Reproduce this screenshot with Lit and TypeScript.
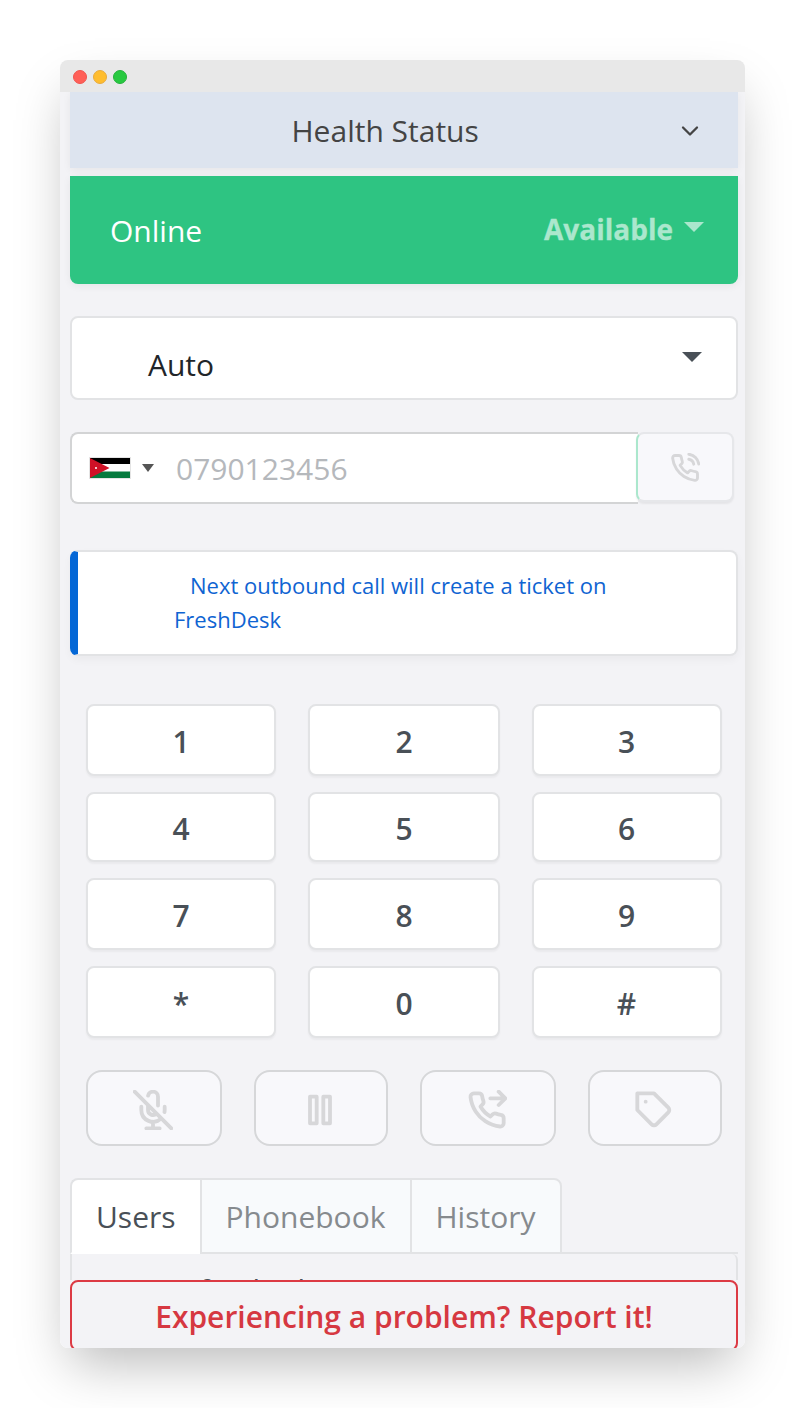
import { LitElement, html, css, svg } from "lit";
import { customElement } from "lit/decorators.js";

const icon = (cls: string, body: unknown) => html`<svg class=${cls} viewBox="0 0 24 24" fill="none" stroke="currentColor" stroke-width="2.300" stroke-linecap="round" stroke-linejoin="round" aria-hidden="true">${body}</svg>`;

const phoneBody = svg`<path d="M22 16.920v3a2 2 0 0 1-2.180 2 19.790 19.790 0 0 1-8.630-3.070 19.500 19.500 0 0 1-6-6 19.790 19.790 0 0 1-3.070-8.670A2 2 0 0 1 4.110 2h3a2 2 0 0 1 2 1.720 12.840 12.840 0 0 0 .7 2.810 2 2 0 0 1-.45 2.110L8.090 9.910a16 16 0 0 0 6 6l1.270-1.270a2 2 0 0 1 2.110-.45 12.840 12.840 0 0 0 2.810.7A2 2 0 0 1 22 16.920z"/>`;

@customElement("app-root")
export class AppRoot extends LitElement {
  static styles = css`
    :host { display: block; width: 805px; height: 1408px; padding: 60px; box-sizing: border-box; overflow: hidden; background: #fff; font-family: "Open Sans", "Noto Sans", sans-serif; font-size: 30px; line-height: 40px; color: #495057; }
    * { box-sizing: border-box; }
    svg { display: block; flex: none; }
    .window { height: 1288px; display: flex; flex-direction: column; border-radius: 8px; box-shadow: 0 25px 50px -10px rgba(0,0,0,.27); }
    .bar { height: 32px; flex: none; display: flex; align-items: center; gap: 6px; padding: 2px 0 0 13px; background: #e8e8e8; border-radius: 8px 8px 0 0; }
    .dot { width: 14px; height: 14px; border-radius: 50%; border: 1px solid; }
    .red { background: #ff5f57; border-color: #f0544e; }
    .yellow { background: #ffbd2e; border-color: #e8ab3c; }
    .green { background: #28c940; border-color: #25b13b; }
    .app { height: 1256px; padding: 0 7px 0 10px; background: #f3f3f6; overflow: hidden; border-radius: 0 0 8px 8px; display: flex; flex-direction: column; }
    .app > * { flex: none; }
    .health { height: 76px; display: flex; align-items: center; background: #dde4ef; color: #444; box-shadow: 0 2px 8px rgba(0,0,0,.06); padding: 2px 38px 0 221.500px; }
    .grow { flex: 1; white-space: nowrap; }
    .chev { width: 20px; height: 20px; margin-top: -1px; }
    .status { height: 108px; margin-top: 8px; display: flex; align-items: center; background: #2ec482; color: #fff; border-radius: 0 0 8px 8px; box-shadow: 0 2px 8px rgba(0,0,0,.06); padding: 2px 34px 0 40px; }
    .avail { font-weight: 700; color: #abe7cd; display: flex; gap: 11px; margin-top: -4px; font-size: 28px; -webkit-text-stroke: .3px #abe7cd; }
    .caret { width: 0; height: 0; border: 10px solid transparent; border-bottom: 0; border-top-color: currentColor; }
    .avail .caret { margin-top: 13px; }
    .select { height: 84px; margin-top: 32px; display: flex; border: 2px solid #e2e3e5; border-radius: 8px; background: #fff; color: #212529; padding: 27px 34px 0 76px; }
    .select .caret { margin-top: 7px; color: #495057; }
    .phone { height: 72px; margin-top: 32px; display: flex; padding-right: 4px; }
    .field { width: 568px; flex: none; border: 2px solid #d3d4d5; border-right: 0; border-radius: 8px 0 0 8px; background: #fff; display: flex; align-items: center; padding-left: 17px; color: #b5b8bc; }
    .number { padding-top: 2px; }
    .flag { width: 42px; height: 22px; }
    .field .caret { border-width: 8px 6px 0; color: #555; margin: 0 22px 0 11px; }
    .call { flex: 1; margin-left: -2px; height: 70px; border: 2px solid #e6e7ea; border-left-color: #abe7cd; border-radius: 8px; background: #f8f8fb; box-shadow: 0 2px 2px rgba(0,0,0,.06); display: flex; align-items: center; justify-content: center; color: #d7d7d9; }
    .ic30 { width: 30px; height: 30px; margin-top: 1px; }
    .alert { height: 106px; margin-top: 46px; border: 2px solid #e2e3e5; border-left: 8px solid #0467d6; border-radius: 8px; background: #fff; color: #0f64d2; font-size: 22px; line-height: 34px; padding: 16px 0 0 96px; text-indent: 16px; box-shadow: 0 4px 8px rgba(0,0,0,.04); }
    .keys { margin: 48px 16px 0; display: grid; grid-template-columns: 190px 192px 190px; grid-template-rows: 72px 70px 72px 72px; column-gap: 32px; row-gap: 16px; }
    .key { display: flex; align-items: center; justify-content: center; padding-top: 3px; border: 2px solid #e2e3e5; border-radius: 8px; background: #fff; font-weight: 600; box-shadow: 0 2px 2px rgba(0,0,0,.04); }
    .key:nth-child(3n) { padding-right: 1px; }
    .key:nth-child(n + 4):nth-child(-n + 6) { padding-top: 4px; }
    .acts { margin: 32px 16px 0; height: 76px; display: grid; grid-template-columns: 136px 134px 136px 134px; gap: 32px; }
    .act { display: flex; align-items: center; justify-content: center; padding: 3px 2px 0 0; border: 2px solid #d6d7d9; border-radius: 16px; background: #f8f8fb; color: #d7d7d9; }
    .ic40 { width: 40px; height: 40px; }
    .tabs { margin-top: 32px; height: 76px; display: flex; border-bottom: 2px solid #e2e3e5; border-radius: 0 8px 0 0; }
    .tab { height: 76px; border: 2px solid #e2e3e5; border-right: 0; background: #f8fafc; color: #868a8e; padding: 17px 0 0 23.500px; }
    .tab:first-child { width: 130px; border-bottom-color: #fff; background: #fff; color: #495057; border-radius: 8px 0 0 0; padding-left: 24px; }
    .tab:nth-child(2) { width: 210px; }
    .tab:last-child { width: 152px; border-right: 2px solid #e2e3e5; border-radius: 0 8px 0 0; }
    .list { height: 26px; overflow: hidden; border: 2px solid #e2e3e5; border-width: 0 2px; border-top-right-radius: 6px; padding: 16px 0 0 127px; white-space: nowrap; }
    .report { height: 71px; border: 2px solid #dc3a44; border-radius: 8px; color: #d63841; font-weight: 600; text-align: center; padding-top: 15.400px; }
  `;

  render() {
    return html`<div class="window">
      <div class="bar"><i class="dot red"></i><i class="dot yellow"></i><i class="dot green"></i></div>
      <div class="app">
        <div class="health"><span class="grow">Health Status</span>
          <svg class="chev" viewBox="0 0 20 20" fill="none" stroke="currentColor" stroke-width="2.300" stroke-linecap="round" stroke-linejoin="round"><path d="M3 6.500l7 7l7-7"/></svg></div>
        <div class="status"><span class="grow">Online</span><span class="avail">Available<i class="caret"></i></span></div>
        <div class="select"><span class="grow">Auto</span><i class="caret"></i></div>
        <div class="phone">
          <div class="field">
            <svg class="flag" viewBox="0 0 42 22"><path fill="#e4e4e4" d="M0 0h42v22H0z"/><path fill="#fff" d="M1 1h40v20H1z"/><path d="M1 1h40v6H1z"/><path fill="#067a3e" d="M1 14.500h40V21H1z"/><path fill="#cf1126" d="M1 1l19.500 10L1 21z"/><circle cx="7" cy="11" r="1" fill="#fff"/></svg>
            <i class="caret"></i><span class="number">0790123456</span>
          </div>
          <div class="call">${icon("ic30", svg`${phoneBody}<path d="M15.050 5A5 5 0 0 1 19 8.950M15.050 1A9 9 0 0 1 23 8.940"/>`)}</div>
        </div>
        <div class="alert">Next outbound call will create a ticket on<br>FreshDesk</div>
        <div class="keys">${["1", "2", "3", "4", "5", "6", "7", "8", "9", "*", "0", "#"].map((k) => html`<div class="key">${k}</div>`)}</div>
        <div class="acts">
          <div class="act">${icon("ic40", svg`<path d="M1 1l22 22M9 9v3a3 3 0 0 0 5.120 2.120M15 9.340V4a3 3 0 0 0-5.940-.6M17 16.950A7 7 0 0 1 5 12v-2M19 10v2a7 7 0 0 1-.11 1.230M12 19v4M8 23h8"/>`)}</div>
          <div class="act">${icon("ic40", svg`<path d="M6 4h4v16H6zM14 4h4v16h-4z"/>`)}</div>
          <div class="act">${icon("ic40", svg`${phoneBody}<path d="M14 5h9M19 1l4 4l-4 4"/>`)}</div>
          <div class="act">${icon("ic40", svg`<path d="M20.590 13.410l-7.170 7.170a2 2 0 0 1-2.830 0L2 12V2h10l8.590 8.590a2 2 0 0 1 0 2.820zM7 7h.01"/>`)}</div>
        </div>
        <div class="tabs"><div class="tab">Users</div><div class="tab">Phonebook</div><div class="tab">History</div></div>
        <div class="list">fresh Chat</div>
        <div class="report">Experiencing a problem? Report it!</div>
      </div></div>`;
  }
}
